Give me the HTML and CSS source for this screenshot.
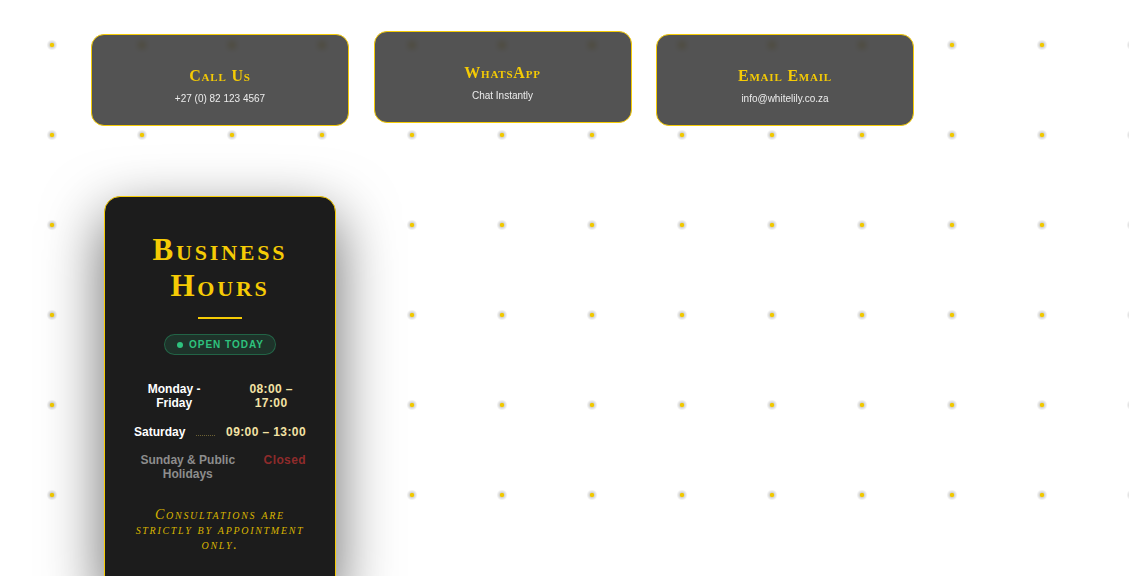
FILE: index.html
```html
<!DOCTYPE html>
<html lang="en">
  <head>
    <meta charset="UTF-8" />
    <meta name="viewport" content="width=device-width, initial-scale=1.0" />
    <title>White Lily - Contact</title>
    <link rel="stylesheet" href="styles.css">
  </head>
  <body>
    <!-- contact cards -->
    <div class="contact-row">
      <div class="contact-card">
        <h4>Call Us</h4>
        <p>+27 (0) 82 123 4567</p>
      </div>
      <div class="contact-card raised">
        <h4>WhatsApp</h4>
        <p>Chat Instantly</p>
      </div>
      <div class="contact-card">
        <h4>Email Email</h4>
        <p>info@whitelily.co.za</p>
      </div>
    </div>

    <!-- opening hours -->
    <div class="hours-card">
      <h2>Business Hours</h2>
      <div class="hours-line"></div>
      <div class="status"><span class="status-dot"></span>Open Today</div>

      <div class="hours-list">
        <div class="hours-row">
          <span class="day">Monday - Friday</span>
          <span class="leader"></span>
          <span class="time">08:00 – 17:00</span>
        </div>
        <div class="hours-row">
          <span class="day">Saturday</span>
          <span class="leader"></span>
          <span class="time">09:00 – 13:00</span>
        </div>
        <div class="hours-row off">
          <span class="day">Sunday &amp; Public Holidays</span>
          <span class="leader"></span>
          <span class="time">Closed</span>
        </div>
      </div>

      <p class="hours-note">Consultations are strictly by appointment only.</p>
    </div>
  </body>
</html>
```

FILE: styles.css
```css
:root {
  --gold: #f5cb05;
  --gold-dim: #d8b400;
  --card-dark: #1c1c1c;
  --cream: #f3e2a4;
  --green: #2ec27e;
}

* {
  box-sizing: border-box;
  margin: 0;
  padding: 0;
}
body {
  font-family: "Liberation Sans", Arial, sans-serif;
  background-color: #fff;
  /* dotted grid */
  background-image: radial-gradient(
    circle,
    #f0c800 0 1.8px,
    rgba(120, 120, 120, 0.3) 2.6px,
    rgba(120, 120, 120, 0) 5.5px
  );
  background-size: 90px 90px;
  background-position: 7px 0;
  min-height: 100vh;
  overflow: hidden;
}

/* contact cards */
.contact-row {
  display: flex;
  gap: 24.5px;
  padding: 34px 0 0 91px;
}
.contact-card {
  width: 258px;
  height: 92px;
  background-color: rgba(34, 34, 34, 0.78);
  backdrop-filter: blur(3px);
  border: 1px solid var(--gold);
  border-radius: 13px;
  padding: 31px 12px 0;
  text-align: center;
}
.contact-card.raised {
  transform: translateY(-3px);
}
.contact-card h4 {
  font-family: "Liberation Serif", serif;
  font-variant: small-caps;
  font-size: 16px;
  line-height: 20px;
  letter-spacing: 0.8px;
  color: var(--gold);
}
.contact-card p {
  margin-top: 6px;
  font-size: 10px;
  line-height: 14px;
  color: #ececec;
}

/* opening hours card */
.hours-card {
  width: 232px;
  margin: 70px 0 0 104px;
  background-color: var(--card-dark);
  border: 1px solid var(--gold);
  border-radius: 16px;
  padding: 35px 29px 40px;
  text-align: center;
  box-shadow: 0 20px 60px rgba(0, 0, 0, 0.6);
}
.hours-card h2 {
  font-family: "Liberation Serif", serif;
  font-variant: small-caps;
  font-size: 31px;
  line-height: 36px;
  letter-spacing: 2.8px;
  color: var(--gold);
}
.hours-line {
  width: 44px;
  height: 2px;
  margin: 13px auto 0;
  background-color: var(--gold);
}
.status {
  display: inline-flex;
  align-items: center;
  gap: 6px;
  margin-top: 15px;
  height: 21px;
  padding: 0 11px 0 12px;
  border: 1px solid rgba(46, 194, 126, 0.35);
  border-radius: 11px;
  background-color: rgba(46, 194, 126, 0.14);
  color: var(--green);
  font-size: 10px;
  font-weight: bold;
  letter-spacing: 1px;
  text-transform: uppercase;
}
.status-dot {
  width: 6px;
  height: 6px;
  border-radius: 50%;
  background-color: var(--green);
}

.hours-list {
  margin-top: 27px;
  display: flex;
  flex-direction: column;
  gap: 14.5px;
}
.hours-row {
  display: flex;
  align-items: flex-start;
  gap: 11px;
  font-size: 12px;
  line-height: 14px;
  font-weight: bold;
}
.hours-row .day {
  color: #fff;
}
.hours-row .time {
  color: var(--cream);
  letter-spacing: 0.4px;
}
.leader {
  flex: 1;
  height: 11px;
  border-bottom: 1px dotted #6d6235;
}
.hours-row.off .day {
  color: #8d8d8d;
}
.hours-row.off .time {
  color: #8f2b2b;
}

.hours-note {
  margin-top: 26px;
  font-family: "Liberation Serif", serif;
  font-style: italic;
  font-variant: small-caps;
  font-size: 14px;
  line-height: 15px;
  letter-spacing: 1.7px;
  color: var(--gold-dim);
}
```
